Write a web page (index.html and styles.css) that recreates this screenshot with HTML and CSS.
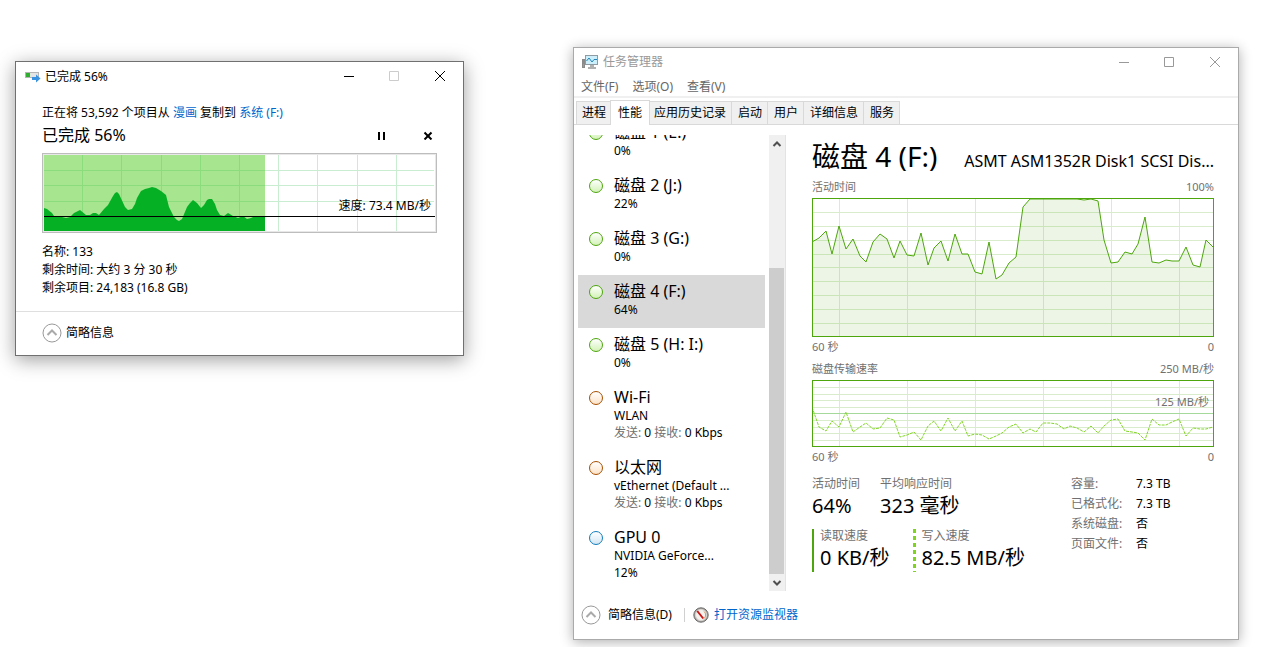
FILE: index.html
```html
<!DOCTYPE html>
<html lang="zh-CN">
<head>
<meta charset="utf-8">
<title>任务管理器</title>
<link rel="stylesheet" href="styles.css">
</head>
<body>
<main class="desktop">

<section class="window copy" aria-label="文件复制">
  <header class="titlebar">
    <svg class="copy-icon" width="16" height="12" viewBox="0 0 16 12" aria-hidden="true">
      <rect x="0.5" y="1.5" width="13" height="5" fill="#e4e4e4" stroke="#b5b5b5"/>
      <rect x="1" y="2" width="4" height="4" fill="#2fae2f"/>
      <path d="M7 6h4V3.500L15.500 7.500 11 11.500V9H7z" fill="#3a93e0"/>
    </svg>
    <h1 class="window-title">已完成 56%</h1>
    <div class="captions">
      <button class="caption" aria-label="最小化"><svg width="12" height="12" viewBox="0 0 12 12"><path d="M2 5.500h10"/></svg></button>
      <button class="caption faint" aria-label="最大化"><svg width="12" height="12" viewBox="0 0 12 12"><path d="M1.500 0.500h9v9h-9z"/></svg></button>
      <button class="caption" aria-label="关闭"><svg width="12" height="12" viewBox="0 0 12 12"><path d="M1 0l10 10M11 0L1 10"/></svg></button>
    </div>
  </header>
  <div class="copy-body">
    <p class="copy-from">正在将 53,592 个项目从 <a href="#">漫画</a> 复制到 <a href="#">系统 (F:)</a></p>
    <div class="copy-status">
      <h2 class="copy-percent">已完成 56%</h2>
      <button class="copy-action" aria-label="暂停"><svg width="10" height="10" viewBox="0 0 10 10"><path d="M1 2h2v8H1zM6 2h2v8H6z"/></svg></button>
      <button class="copy-action" aria-label="取消"><svg width="10" height="10" viewBox="0 0 10 10"><path d="M1.500 2.500l7 7M8.500 2.500l-7 7" stroke="#000" stroke-width="2"/></svg></button>
    </div>
    <div class="speed-chart">
      <svg viewBox="0 0 391 76" preserveAspectRatio="none" aria-hidden="true">
        <path class="speed-grid" d="M234.500 0v76M273.500 0v76M313.500 0v76M352.500 0v76M221 15.500h169M221 30.500h169M221 46.500h169"/>
        <rect class="speed-done" width="221" height="76"/>
        <path class="speed-done-grid" d="M38.500 0v76M77.500 0v76M117.500 0v76M156.500 0v76M195.500 0v76M0 15.500h221M0 30.500h221M0 46.500h221"/>
        <path class="speed-area" d="M0 53L3 54 8 58 10 61 18 62 22 63 26 62 30 58 36 55 42 60 46 60 49 58 52 58 55 60 60 54 64 50 69 41 71 38 73 37 75 39 81 52 84 55 88 54 91 49 93 43 97 36 101 34 105 33 108 32 112 33 117 36 122 40 125 52 130 62 133 65 135 66 138 64 143 52 146 48 149 45 153 48 157 53 160 50 163 45 165 44 168 44 171 49 173 55 176 60 180 61 184 58 189 61 194 63 199 61 203 64 207 63 211 61 215 62 221 61V76H0z"/>
        <path class="speed-line" d="M0 61.500h391"/>
      </svg>
      <span class="speed-text">速度: 73.4 MB/秒</span>
    </div>
    <ul class="copy-facts">
      <li>名称: 133</li>
      <li>剩余时间: 大约 3 分 30 秒</li>
      <li>剩余项目: 24,183 (16.8 GB)</li>
    </ul>
  </div>
  <footer class="copy-footer">
    <button class="fold">
      <svg width="20" height="20" viewBox="0 0 20 20" aria-hidden="true"><circle cx="10" cy="10" r="9"/><path d="M5.500 12L10 7.500 14.500 12"/></svg>
      简略信息
    </button>
  </footer>
</section>

<section class="window manager" aria-label="任务管理器">
  <header class="titlebar">
    <svg class="manager-icon" width="17" height="16" viewBox="0 0 17 16" aria-hidden="true">
      <rect x="0.500" y="5.500" width="2" height="8" fill="#9a9a9a" stroke="#8a8a8a"/>
      <rect x="1" y="6" width="1" height="4" fill="#3fc13f"/>
      <rect x="3.500" y="1.500" width="12" height="9" fill="#cdeefb" stroke="#8f9ba2"/>
      <path d="M4.500 7l2.500-3 3 4 2-2.500h3" fill="none" stroke="#1f86b8"/>
      <path d="M8 11h4v2h2v2H6v-2h2z" fill="#b0b0b0"/>
    </svg>
    <h1 class="window-title">任务管理器</h1>
    <div class="captions">
      <button class="caption" aria-label="最小化"><svg width="12" height="12" viewBox="0 0 12 12"><path d="M2 6.500h10"/></svg></button>
      <button class="caption" aria-label="最大化"><svg width="12" height="12" viewBox="0 0 12 12"><path d="M1.500 1.500h9v9h-9z"/></svg></button>
      <button class="caption" aria-label="关闭"><svg width="12" height="12" viewBox="0 0 12 12"><path d="M1 1l10 10M11 1L1 11"/></svg></button>
    </div>
  </header>
  <nav class="menu">
    <button>文件(F)</button>
    <button>选项(O)</button>
    <button>查看(V)</button>
  </nav>
  <div class="tabs" role="tablist">
    <button role="tab">进程</button>
    <button role="tab" aria-selected="true" class="active">性能</button>
    <button role="tab">应用历史记录</button>
    <button role="tab">启动</button>
    <button role="tab">用户</button>
    <button role="tab">详细信息</button>
    <button role="tab">服务</button>
  </div>
  <div class="manager-body">
    <div class="side">
      <div class="devices">
        <button class="device disk"><span class="dot"></span><span class="device-text"><span class="device-name">磁盘 1 (E:)</span><span>0%</span></span></button>
        <button class="device disk"><span class="dot"></span><span class="device-text"><span class="device-name">磁盘 2 (J:)</span><span>22%</span></span></button>
        <button class="device disk"><span class="dot"></span><span class="device-text"><span class="device-name">磁盘 3 (G:)</span><span>0%</span></span></button>
        <button class="device disk selected"><span class="dot"></span><span class="device-text"><span class="device-name">磁盘 4 (F:)</span><span>64%</span></span></button>
        <button class="device disk"><span class="dot"></span><span class="device-text"><span class="device-name">磁盘 5 (H: I:)</span><span>0%</span></span></button>
        <button class="device net"><span class="dot"></span><span class="device-text"><span class="device-name">Wi-Fi</span><span>WLAN</span><span><i>发送:</i> 0 <i>接收:</i> 0 Kbps</span></span></button>
        <button class="device net"><span class="dot"></span><span class="device-text"><span class="device-name">以太网</span><span>vEthernet (Default ...</span><span><i>发送:</i> 0 <i>接收:</i> 0 Kbps</span></span></button>
        <button class="device gpu"><span class="dot"></span><span class="device-text"><span class="device-name">GPU 0</span><span>NVIDIA GeForce...</span><span>12%</span></span></button>
      </div>
      <div class="scrollbar" aria-hidden="true">
        <svg width="16" height="17" viewBox="0 0 16 17"><path d="M4.500 11L8 7.500 11.500 11"/></svg>
        <div class="thumb"></div>
        <svg width="16" height="17" viewBox="0 0 16 17"><path d="M4.500 7L8 10.500 11.500 7"/></svg>
      </div>
    </div>
    <div class="detail">
      <div class="detail-head">
        <h2>磁盘 4 (F:)</h2>
        <p>ASMT ASM1352R Disk1 SCSI Dis...</p>
      </div>
      <div class="axis axis-first"><span>活动时间</span><span>100%</span></div>
      <div class="chart chart-active">
        <svg viewBox="1 1 400 137" preserveAspectRatio="none" aria-hidden="true">
          <path class="grid" d="M27.500 0v139M95.500 0v139M163.500 0v139M231.500 0v139M299.500 0v139M367.500 0v139M0 14.500h402M0 28.500h402M0 42.500h402M0 56.500h402M0 69.500h402M0 83.500h402M0 97.500h402M0 111.500h402M0 125.500h402"/>
          <path class="area" d="M-2 44H0L7 40 14 33 20 56 27 28 34 51 41 41 48 58 54 64 61 44 68 36 75 41 82 60 88 43 95 57 102 58 109 35 116 67 122 50 129 43 136 63 143 36 150 56 156 56 163 74 170 76 177 44 184 81 190 77 197 65 204 59 211 9 218 1 265 1 272 2 279 1 286 3 292 42 299 65 306 64 313 54 320 56 326 46 333 19 340 64 347 65 354 62 360 63 367 63 374 49 381 67 388 69 394 42 402 50H405V142H-2z"/>
        </svg>
      </div>
      <div class="axis axis-time"><span>60 秒</span><span>0</span></div>
      <div class="axis"><span>磁盘传输速率</span><span>250 MB/秒</span></div>
      <div class="chart chart-rate">
        <svg viewBox="1 1 400 65" preserveAspectRatio="none" aria-hidden="true">
          <path class="grid" d="M27.500 0v67M95.500 0v67M163.500 0v67M231.500 0v67M299.500 0v67M367.500 0v67M0 7.500h402M0 14.500h402M0 20.500h402M0 27.500h402M0 40.500h402M0 47.500h402M0 53.500h402M0 60.500h402"/>
          <path class="middle" d="M0 33.500h402"/>
          <path class="write" d="M0 27L7 47 14 51 20 41 27 47 34 32 41 52 48 47 54 43 61 49 68 48 75 38 82 40 88 57 95 55 102 52 109 60 116 46 122 41 129 51 136 38 143 51 150 41 156 56 163 54 170 55 177 59 184 56 190 53 197 47 204 44 211 53 218 49 224 52 231 43 238 43 245 44 252 49 258 46 265 48 272 52 279 46 286 53 292 46 299 40 306 39 313 51 320 52 326 53 333 60 340 39 347 45 354 45 360 42 367 39 374 56 381 48 388 49 394 49 401 47"/>
        </svg>
        <span class="rate-mark">125 MB/秒</span>
      </div>
      <div class="axis axis-time"><span>60 秒</span><span>0</span></div>
      <div class="stats">
        <div class="stat-rows">
          <div class="stat-row">
            <div class="stat"><span>活动时间</span><strong>64%</strong></div>
            <div class="stat"><span>平均响应时间</span><strong>323 毫秒</strong></div>
          </div>
          <div class="stat-row">
            <div class="stat read"><span>读取速度</span><strong>0 KB/秒</strong></div>
            <div class="stat written"><span>写入速度</span><strong>82.5 MB/秒</strong></div>
          </div>
        </div>
        <table class="facts">
          <tr><th scope="row">容量:</th><td>7.3 TB</td></tr>
          <tr><th scope="row">已格式化:</th><td>7.3 TB</td></tr>
          <tr><th scope="row">系统磁盘:</th><td>否</td></tr>
          <tr><th scope="row">页面文件:</th><td>否</td></tr>
        </table>
      </div>
    </div>
  </div>
  <footer class="manager-footer">
    <button class="fold">
      <svg width="20" height="20" viewBox="0 0 20 20" aria-hidden="true"><circle cx="10" cy="10" r="9"/><path d="M5.500 12L10 7.500 14.500 12"/></svg>
      简略信息(D)
    </button>
    <span class="divider"></span>
    <a class="monitor-link" href="#">
      <svg width="16" height="16" viewBox="0 0 16 16" aria-hidden="true">
        <circle cx="8" cy="8" r="7.200" fill="#a9a49f" stroke="#6b6b6b"/>
        <circle cx="8" cy="8" r="5.500" fill="#f4f2ef" stroke="#d9d6d2"/>
        <path d="M11 4.500a4.500 4.500 0 0 1 0 7" fill="none" stroke="#d99a6a"/>
        <path d="M3.500 4.500L5 3.500 11 11l-1.500 1z" fill="#cc1414"/>
      </svg>
      打开资源监视器
    </a>
  </footer>
</section>

</main>
</body>
</html>
```
FILE: styles.css
```css
* { box-sizing: border-box; }

body {
  margin: 0;
  background: #fff;
  color: #000;
  font: 12px/18px "Noto Sans", "Noto Sans CJK SC", sans-serif;
}

h1, h2, p, ul { margin: 0; padding: 0; font-weight: 400; }
ul { list-style: none; }
i, strong, th { font-style: normal; font-weight: 400; }
a { color: #0066cc; text-decoration: none; }
svg { display: block; flex: none; }

button {
  margin: 0;
  padding: 0;
  border: 0;
  background: none;
  color: inherit;
  font: inherit;
  text-align: left;
}

.desktop { position: relative; min-height: 100vh; overflow: hidden; }

.window { position: absolute; background: #fff; }

.copy {
  left: 15px;
  top: 61px;
  width: 449px;
  border: 1px solid #707070;
  box-shadow: 0 4px 18px rgba(0, 0, 0, .38);
}

.manager {
  left: 573px;
  right: 23px;
  top: 47px;
  border: 1px solid #aaa;
  box-shadow: 0 2px 12px rgba(0, 0, 0, .32);
}

/* Title bars */
.titlebar { display: flex; align-items: center; height: 30px; padding-left: 9px; }
.window-title { flex: 1; margin-left: 4px; font-size: 12px; line-height: 18px; }
.captions { display: flex; }
.caption { display: flex; align-items: center; justify-content: center; width: 46px; height: 28px; }
.caption svg { fill: none; stroke: currentColor; stroke-width: 1; }
.caption.faint { color: #ccc; }
.manager .titlebar { height: 28px; padding-left: 8px; color: #999; }

/* Copy progress window */
.copy-body { padding: 11px 26px 14px; border-bottom: 1px solid #dfdfdf; }
.copy-from { line-height: 20px; }
.copy-status { display: flex; align-items: center; margin-bottom: 6px; }
.copy-percent { flex: 1; font-size: 16px; line-height: 24px; }
.copy-action { display: flex; justify-content: center; width: 18px; margin-left: 28px; }

.speed-chart { position: relative; padding: 1px; border: 1px solid #bdbdbd; background: #e8e8e8; }
.speed-chart svg { width: 100%; height: 76px; background: #fff; shape-rendering: crispEdges; }
.speed-grid { fill: none; stroke: #c9edd1; }
.speed-done { fill: #a8e58f; }
.speed-done-grid { fill: none; stroke: #8bdc7c; }
.speed-area { fill: #06b025; shape-rendering: auto; }
.speed-line { stroke: #000; }
.speed-text { position: absolute; right: 5px; top: 43px; }

.copy-facts { margin-top: 10px; }
.copy-footer { padding: 11px 26px 12px; }

.fold { display: flex; align-items: center; gap: 4px; height: 20px; }
.fold svg { fill: none; stroke: #999; }
.fold path { stroke-width: 2; stroke: #aaa; }

/* Task manager */
.menu { display: flex; gap: 14px; padding: 1px 7px 0; border-bottom: 2px solid #f0f0f0; color: #666; line-height: 19px; }

.tabs { display: flex; align-items: flex-end; height: 27px; padding-left: 2px; border-bottom: 1px solid #d9d9d9; }
.tabs button {
  height: 23px;
  padding: 0 5px 0 6px;
  border: 1px solid #d9d9d9;
  border-width: 1px 1px 0 0;
  background: #f0f0f0;
  line-height: 22px;
}
.tabs button:first-child { padding-left: 5px; border-left-width: 1px; }
.tabs .active {
  position: relative;
  height: 25px;
  margin: 0 -2px -1px;
  padding: 0 7px;
  border-left-width: 1px;
  background: #fff;
}

.manager-body { display: flex; }
.side { display: flex; flex: none; gap: 4px; padding: 10px 0 0 4px; }
.devices { width: 187px; height: 456px; overflow: hidden; display: flex; flex-direction: column; justify-content: flex-end; }
.device { display: flex; flex: none; gap: 11px; padding: 7px 11px 10px; }
.device.selected { background: #d9d9d9; }
.device-text { display: flex; flex-direction: column; line-height: 17px; white-space: nowrap; }
.device-text i { color: #707070; }
.device .device-name { font-size: 16px; line-height: 19px; }
.dot { flex: none; width: 14px; height: 14px; margin-top: 3px; border: 1px solid; border-radius: 50%; }
.disk .dot { border-color: #4da60c; background: linear-gradient(#fff, #d3f2b8); }
.net .dot { border-color: #a74f01; background: linear-gradient(#fff, #fde3c8); }
.gpu .dot { border-color: #117dbb; background: linear-gradient(#fff, #d3e6f3); }

.scrollbar { display: flex; flex-direction: column; justify-content: space-between; width: 17px; border-right: 1px solid #e3e3e3; background: #f0f0f0; }
.scrollbar svg { fill: none; stroke: #505050; stroke-width: 2; }
.thumb { height: 67%; margin: auto 1px 0 0; background: #cdcdcd; }

.detail { flex: 1; min-width: 0; padding: 12px 24px 0 26px; }
.detail-head { display: flex; align-items: baseline; justify-content: space-between; height: 42px; white-space: nowrap; }
.detail-head h2 { font-size: 28px; line-height: 38px; }
.detail-head p { font-size: 16px; }

.axis { display: flex; justify-content: space-between; color: #707070; font-size: 11px; line-height: 22px; }
.axis-first { padding-bottom: 3px; line-height: 16px; }
.axis-time { padding-bottom: 1px; line-height: 20px; }

.chart { position: relative; border: 1px solid #4da60c; }
.chart svg { width: 100%; fill: none; }
.chart-active svg { height: 137px; }
.chart-rate svg { height: 65px; }
.grid { stroke: #d9eccc; shape-rendering: crispEdges; }
.middle { stroke: #a5d99b; shape-rendering: crispEdges; }
.area { fill: rgba(77, 166, 12, .1); stroke: #4da60c; }
.write { stroke: #84d62a; stroke-dasharray: 3 1; }
.rate-mark { position: absolute; right: 4px; top: 12px; color: #707070; font-size: 11px; }

.stats { display: flex; padding-top: 6px; }
.stat-rows { flex: none; width: 259px; padding-top: 3px; }
.stat-row { display: flex; gap: 20px; margin-bottom: 9px; white-space: nowrap; }
.stat { display: flex; flex-direction: column; gap: 1px; color: #707070; line-height: 14px; }
.stat strong { color: #000; font-size: 20px; line-height: 28px; }
.read { padding: 0 4px 0 6px; border-left: 2px solid #4da60c; }
.written {
  padding-left: 8px;
  background: repeating-linear-gradient(#7fd41f 0 4px, transparent 4px 7px) 0 0 / 3px 100% no-repeat;
}

.facts { align-self: flex-start; border-collapse: collapse; line-height: 20px; }
.facts th, .facts td { padding: 0; text-align: left; }
.facts th { width: 65px; color: #707070; }

.manager-footer { display: flex; align-items: center; height: 48px; padding-left: 7px; }
.manager-footer .fold { gap: 7px; }
.divider { width: 1px; height: 14px; margin: 0 8px 0 12px; background: #d0d0d0; }
.monitor-link { display: flex; align-items: center; gap: 5px; }
```
